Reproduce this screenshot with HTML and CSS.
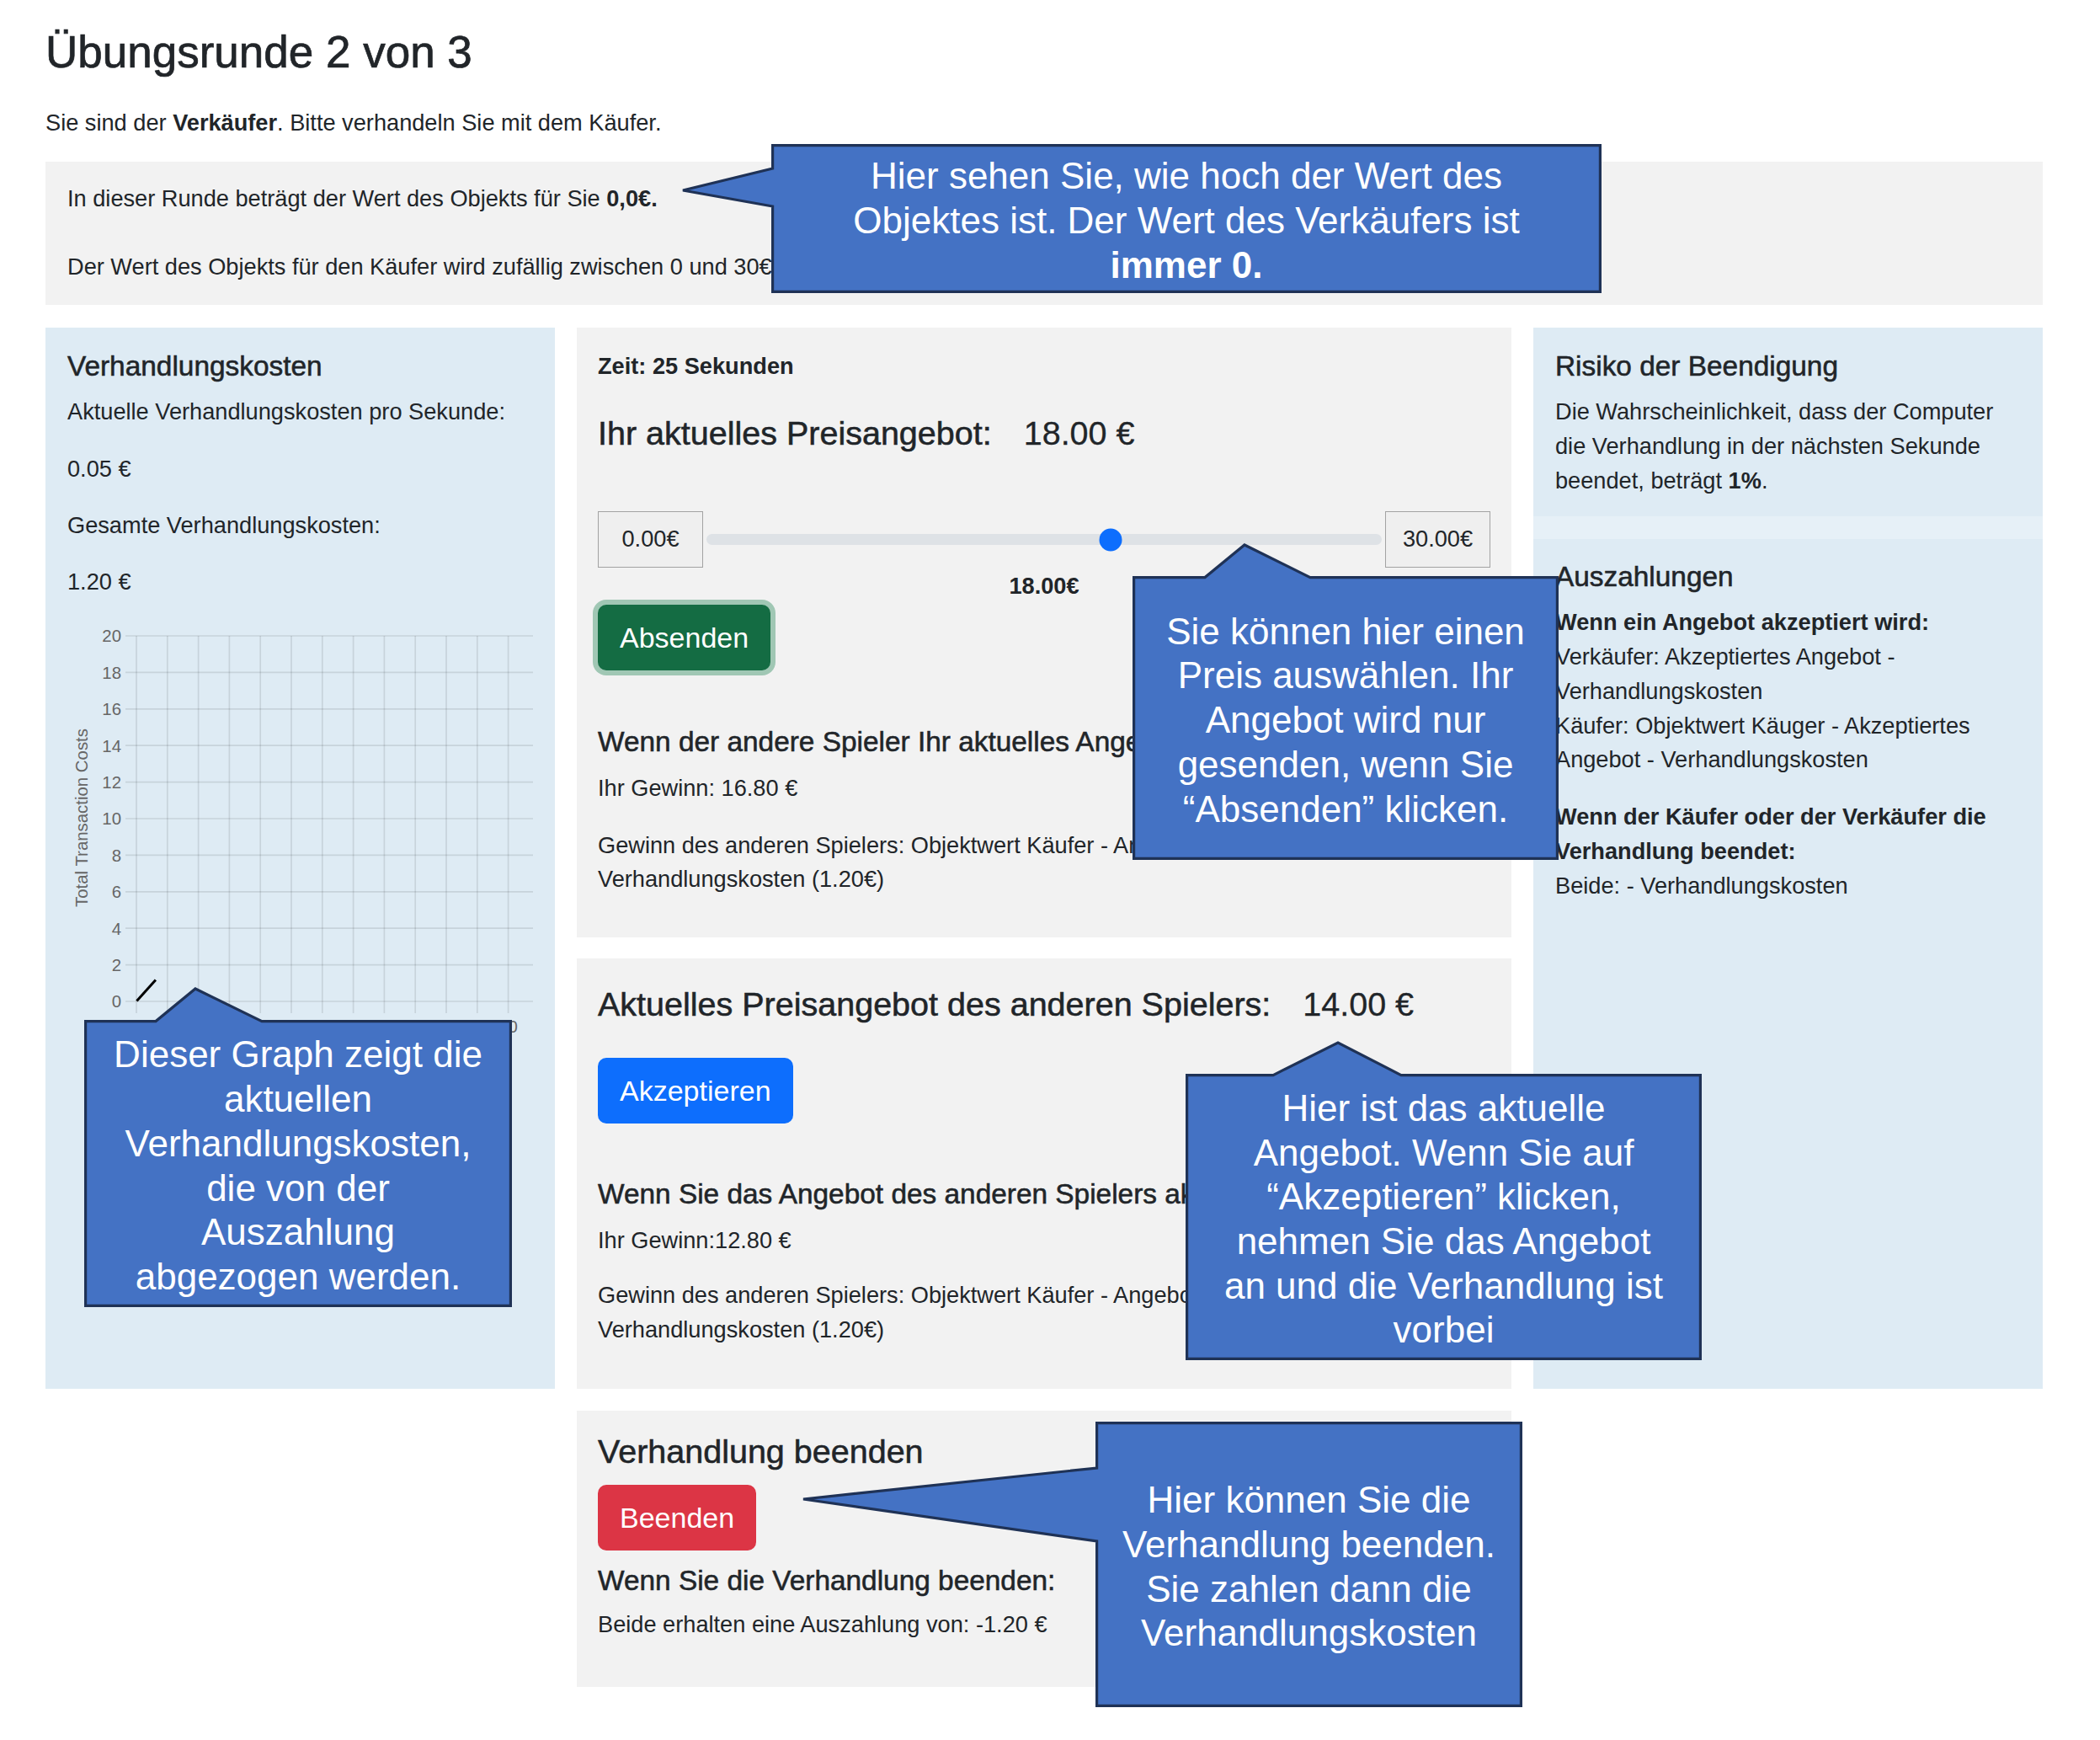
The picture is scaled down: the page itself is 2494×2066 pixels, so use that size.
FILE: index.html
```html
<!DOCTYPE html>
<html lang="de">
<head>
<meta charset="utf-8">
<title>Übungsrunde 2 von 3</title>
<link rel="stylesheet" href="styles.css">
</head>
<body>
<div class="page">
  <h2 class="title">Übungsrunde 2 von 3</h2>
  <p class="intro">Sie sind der <b>Verkäufer</b>. Bitte verhandeln Sie mit dem Käufer.</p>
  <div class="info">
    <p>In dieser Runde beträgt der Wert des Objekts für Sie <b>0,0€.</b></p>
    <p>Der Wert des Objekts für den Käufer wird zufällig zwischen 0 und 30€ bestimmt.</p>
  </div>

  <div class="layout">
    <section class="costs">
      <h5 class="h5 costs-title">Verhandlungskosten</h5>
      <p class="costs-p">Aktuelle Verhandlungskosten pro Sekunde:</p>
      <p class="costs-p">0.05 €</p>
      <p class="costs-p">Gesamte Verhandlungskosten:</p>
      <p class="costs-p">1.20 €</p>
      <svg class="chart" width="553" height="500" viewBox="0 0 553 500">
        <g stroke="rgba(0,0,0,0.1)" stroke-width="1.7">
          <line x1="69" y1="17" x2="553" y2="17"/>
          <line x1="69" y1="60.4" x2="553" y2="60.4"/>
          <line x1="69" y1="103.8" x2="553" y2="103.8"/>
          <line x1="69" y1="147.2" x2="553" y2="147.2"/>
          <line x1="69" y1="190.6" x2="553" y2="190.6"/>
          <line x1="69" y1="234" x2="553" y2="234"/>
          <line x1="69" y1="277.4" x2="553" y2="277.4"/>
          <line x1="69" y1="320.8" x2="553" y2="320.8"/>
          <line x1="69" y1="364.2" x2="553" y2="364.2"/>
          <line x1="69" y1="407.6" x2="553" y2="407.6"/>
          <line x1="69" y1="451" x2="553" y2="451"/>
          <line x1="82" y1="17" x2="82" y2="465"/>
          <line x1="118.8" y1="17" x2="118.8" y2="465"/>
          <line x1="155.6" y1="17" x2="155.6" y2="465"/>
          <line x1="192.4" y1="17" x2="192.4" y2="465"/>
          <line x1="229.2" y1="17" x2="229.2" y2="465"/>
          <line x1="266" y1="17" x2="266" y2="465"/>
          <line x1="302.8" y1="17" x2="302.8" y2="465"/>
          <line x1="339.6" y1="17" x2="339.6" y2="465"/>
          <line x1="376.4" y1="17" x2="376.4" y2="465"/>
          <line x1="413.2" y1="17" x2="413.2" y2="465"/>
          <line x1="450" y1="17" x2="450" y2="465"/>
          <line x1="486.8" y1="17" x2="486.8" y2="465"/>
          <line x1="523.6" y1="17" x2="523.6" y2="465"/>
        </g>
        <g class="chart-label" text-anchor="end">
          <text x="64" y="24.3">20</text>
          <text x="64" y="67.7">18</text>
          <text x="64" y="111.1">16</text>
          <text x="64" y="154.5">14</text>
          <text x="64" y="197.9">12</text>
          <text x="64" y="241.3">10</text>
          <text x="64" y="284.7">8</text>
          <text x="64" y="328.1">6</text>
          <text x="64" y="371.5">4</text>
          <text x="64" y="414.9">2</text>
          <text x="64" y="458.3">0</text>
        </g>
        <g class="chart-label" text-anchor="middle">
          <text x="82" y="488">0</text>
          <text x="155.6" y="488">10</text>
          <text x="229.2" y="488">20</text>
          <text x="302.8" y="488">30</text>
          <text x="376.4" y="488">40</text>
          <text x="450" y="488">50</text>
          <text x="523.6" y="488">60</text>
        </g>
        <text class="chart-label" transform="translate(24,233) rotate(-90)" text-anchor="middle">Total Transaction Costs</text>
        <line x1="82.4" y1="450.5" x2="104.9" y2="425.5" stroke="#000" stroke-width="3"/>
      </svg>
    </section>

    <div class="middle">
      <section class="card card-offer">
        <p class="time">Zeit: 25 Sekunden</p>
        <h4 class="h4 offer-title">Ihr aktuelles Preisangebot:<span class="amount">18.00 €</span></h4>
        <div class="slider-row">
          <div class="bound">0.00€</div>
          <div class="track"><div class="thumb" style="left: 59.8%"></div></div>
          <div class="bound">30.00€</div>
        </div>
        <p class="slider-value">18.00€</p>
        <button class="btn btn-success btn-send">Absenden</button>
        <h5 class="h5 gain-title">Wenn der andere Spieler Ihr aktuelles Angebot akzeptiert:</h5>
        <p class="gain">Ihr Gewinn: 16.80 €</p>
        <p class="other">Gewinn des anderen Spielers: Objektwert Käufer - Angebot -<br>Verhandlungskosten (1.20€)</p>
      </section>

      <section class="card card-other">
        <h4 class="h4 other-title">Aktuelles Preisangebot des anderen Spielers:<span class="amount">14.00 €</span></h4>
        <button class="btn btn-primary btn-accept">Akzeptieren</button>
        <h5 class="h5 gain-title">Wenn Sie das Angebot des anderen Spielers akzeptieren:</h5>
        <p class="gain gain-2">Ihr Gewinn:12.80 €</p>
        <p class="other">Gewinn des anderen Spielers: Objektwert Käufer - Angebot -<br>Verhandlungskosten (1.20€)</p>
      </section>
    </div>

    <aside class="side">
      <section class="side-card risk">
        <h5 class="h5 side-title">Risiko der Beendigung</h5>
        <p class="side-p">Die Wahrscheinlichkeit, dass der Computer die Verhandlung in der nächsten Sekunde beendet, beträgt <b>1%</b>.</p>
      </section>
      <section class="side-card payouts">
        <h5 class="h5 side-title">Auszahlungen</h5>
        <p class="side-p payout-p"><b>Wenn ein Angebot akzeptiert wird:</b><br>Verkäufer: Akzeptiertes Angebot - Verhandlungskosten<br>Käufer: Objektwert Käuger - Akzeptiertes Angebot - Verhandlungskosten</p>
        <p class="side-p"><b>Wenn der Käufer oder der Verkäufer die Verhandlung beendet:</b><br>Beide: - Verhandlungskosten</p>
      </section>
    </aside>

    <section class="card card-end">
      <h4 class="h4 end-title">Verhandlung beenden</h4>
      <button class="btn btn-danger btn-end">Beenden</button>
      <h5 class="h5 end-sub">Wenn Sie die Verhandlung beenden:</h5>
      <p class="end-p">Beide erhalten eine Auszahlung von: -1.20 €</p>
    </section>
  </div>

  <div class="callout callout-value">
    <svg class="callout-shape" width="986" height="177"><path d="M1.6,1.6 H984.4 V175.4 H1.6 V74 L-105,55 L1.6,29 Z"/></svg>
    <div class="callout-text">Hier sehen Sie, wie hoch der Wert des<br>Objektes ist. Der Wert des Verkäufers ist<br><b>immer 0.</b></div>
  </div>

  <div class="callout callout-slider">
    <svg class="callout-shape" width="506" height="337"><path d="M1.6,1.6 H86 L133,-37 L211,1.6 H504.4 V335.4 H1.6 Z"/></svg>
    <div class="callout-text">Sie können hier einen<br>Preis auswählen. Ihr<br>Angebot wird nur<br>gesenden, wenn Sie<br>“Absenden” klicken.</div>
  </div>

  <div class="callout callout-accept">
    <svg class="callout-shape" width="613" height="340"><path d="M1.6,1.6 H104 L181,-37 L256,1.6 H611.4 V338.4 H1.6 Z"/></svg>
    <div class="callout-text">Hier ist das aktuelle<br>Angebot. Wenn Sie auf<br>“Akzeptieren” klicken,<br>nehmen Sie das Angebot<br>an und die Verhandlung ist<br>vorbei</div>
  </div>

  <div class="callout callout-end">
    <svg class="callout-shape" width="507" height="339"><path d="M1.6,1.6 H505.4 V337.4 H1.6 V142 L-347,92 L1.6,55 Z"/></svg>
    <div class="callout-text">Hier können Sie die<br>Verhandlung beenden.<br>Sie zahlen dann die<br>Verhandlungskosten</div>
  </div>

  <div class="callout callout-graph">
    <svg class="callout-shape" width="508" height="341"><path d="M1.6,1.6 H85 L132,-37 L211,1.6 H506.4 V339.4 H1.6 Z"/></svg>
    <div class="callout-text">Dieser Graph zeigt die<br>aktuellen<br>Verhandlungskosten,<br>die von der<br>Auszahlung<br>abgezogen werden.</div>
  </div>
</div>
</body>
</html>
```

FILE: styles.css
```css
* {
  box-sizing: border-box;
}

html,
body {
  margin: 0;
  padding: 0;
  background: #ffffff;
}

body {
  font-family: "Liberation Sans", Arial, sans-serif;
  font-size: 27.2px;
  line-height: 1.5;
  color: #212529;
}

p {
  margin: 0;
}

.page {
  position: relative;
  width: 2494px;
  min-height: 2066px;
  padding: 30px 68px 0 54px;
}

.title {
  font-size: 53px;
  font-weight: 500;
  line-height: 1.2;
  margin: 0 0 32px;
  -webkit-text-stroke: 0.7px #212529;
}

.intro {
  margin: 0 0 26px;
}

.info {
  background: #f2f2f2;
  padding: 24px 26px;
}

.info p + p {
  margin-top: 40px;
}

.h4,
.h5 {
  font-weight: 500;
  line-height: 1.2;
  margin: 0;
  -webkit-text-stroke: 0.55px #212529;
}

.h4 {
  font-size: 39.5px;
  line-height: 49px;
}

.h5 {
  font-size: 33.4px;
  line-height: 40.8px;
}

.layout {
  display: grid;
  grid-template-columns: 605px 1110px 605px;
  column-gap: 26px;
  row-gap: 26px;
  margin-top: 27px;
}

/* left column */
.costs {
  grid-column: 1;
  grid-row: 1;
  background: #deebf4;
  padding: 26px 26px 25px;
}

.costs-title {
  margin-bottom: 13.6px;
}

.costs-p {
  margin-bottom: 26.4px;
}

.chart {
  display: block;
  overflow: visible;
}

.chart-label {
  fill: #666666;
  font-size: 20.4px;
  font-family: "Liberation Sans", Arial, sans-serif;
}

/* middle column */
.middle {
  grid-column: 2;
  grid-row: 1;
  display: flex;
  flex-direction: column;
  gap: 25px;
}

.card {
  background: #f2f2f2;
  padding: 24px 25px;
}

.card-offer {
  padding-top: 26px;
  padding-bottom: 48px;
}

.time {
  font-weight: 700;
  margin-bottom: 34px;
}

.offer-title {
  margin-bottom: 68.6px;
}

.amount {
  margin-left: 38px;
  -webkit-text-stroke: 0.3px #212529;
}

.slider-row {
  display: flex;
  align-items: center;
  height: 67px;
  margin-bottom: 2px;
}

.bound {
  width: 125px;
  height: 67px;
  border: 1px solid #a3a3a3;
  background: #efefef;
  display: flex;
  align-items: center;
  justify-content: center;
}

.track {
  position: relative;
  flex: 1;
  height: 13px;
  margin: 0 4px;
  border-radius: 7px;
  background: #dee2e6;
}

.thumb {
  position: absolute;
  top: 50%;
  width: 27px;
  height: 27px;
  border-radius: 50%;
  background: #0d6efd;
  transform: translate(-50%, -50%);
}

.slider-value {
  text-align: center;
  font-weight: 700;
  margin-bottom: 1px;
}

.btn {
  display: block;
  width: max-content;
  border: 0;
  border-radius: 10px;
  padding: 13px 26px;
  font-family: "Liberation Sans", Arial, sans-serif;
  font-size: 34px;
  line-height: 52px;
  color: #ffffff;
}

.btn-success {
  background: #146c43;
  box-shadow: 0 0 0 6px #a0c7b4;
}

.btn-primary {
  background: #0d6efd;
}

.btn-danger {
  background: #dc3545;
}

.btn-send {
  margin-bottom: 65px;
}

.gain-title {
  margin-bottom: 13.6px;
}

.gain {
  margin-bottom: 27.2px;
}

.gain-2 {
  margin-bottom: 25px;
}

.card-other {
  padding-top: 30px;
  padding-bottom: 49px;
}

.other-title {
  margin-bottom: 39px;
}

.btn-accept {
  margin-bottom: 64px;
}

.card-end {
  grid-column: 2;
  grid-row: 2;
  padding-bottom: 53px;
}

.end-title {
  margin-bottom: 15px;
}

.btn-end {
  margin-bottom: 16px;
}

.end-sub {
  margin-bottom: 11.4px;
}

/* right column */
.side {
  grid-column: 3;
  grid-row: 1;
  display: flex;
  flex-direction: column;
  gap: 27px;
  background: #e6f0f7;
}

.side-card {
  background: #deebf4;
  padding: 26px 26px 21px;
}

.payouts {
  flex: 1;
  padding-top: 25px;
}

.side-title {
  margin-bottom: 13.6px;
}

.payout-p {
  margin-bottom: 27.2px;
}

/* callouts */
.callout {
  position: absolute;
  z-index: 5;
  display: flex;
  align-items: center;
  justify-content: center;
  text-align: center;
  color: #ffffff;
  font-family: "Liberation Sans", Arial, sans-serif;
  font-size: 44px;
  line-height: 52.7px;
  white-space: nowrap;
}

.callout-shape {
  position: absolute;
  left: 0;
  top: 0;
  overflow: visible;
}

.callout-shape path {
  fill: #4472c4;
  stroke: #1f3256;
  stroke-width: 3.2;
  stroke-linejoin: miter;
}

.callout-text {
  position: relative;
  padding-top: 6px;
}

.callout-value {
  left: 916px;
  top: 171px;
  width: 986px;
  height: 177px;
}

.callout-slider {
  left: 1345px;
  top: 684px;
  width: 506px;
  height: 337px;
}

.callout-accept {
  left: 1408px;
  top: 1275px;
  width: 613px;
  height: 340px;
}

.callout-end {
  left: 1301px;
  top: 1688px;
  width: 507px;
  height: 339px;
}

.callout-graph {
  left: 100px;
  top: 1211px;
  width: 508px;
  height: 341px;
}
```
